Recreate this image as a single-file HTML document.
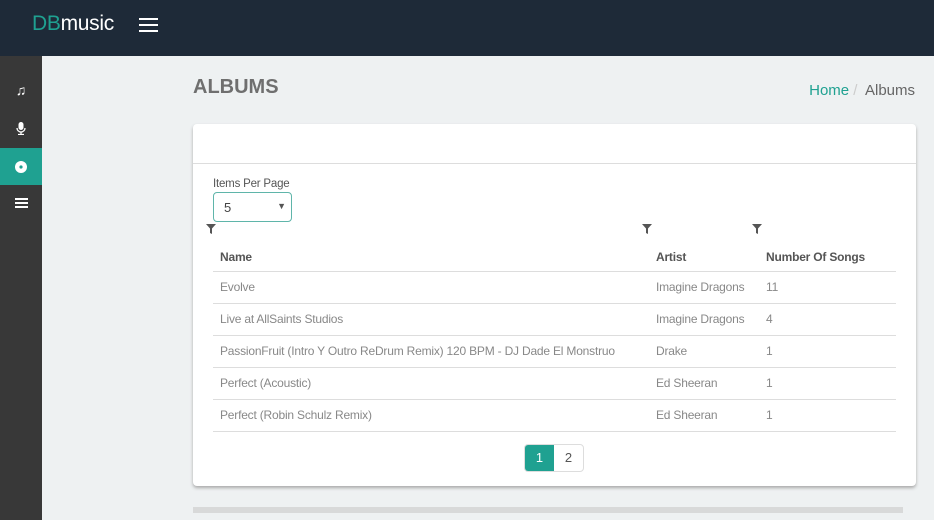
<!DOCTYPE html><html><head><style>
*{margin:0;padding:0;box-sizing:border-box}
body{width:934px;height:520px;overflow:hidden;background:#eef1f2;font-family:"Liberation Sans",sans-serif;position:relative}
.hdr{position:absolute;left:0;top:0;width:934px;height:56px;background:#1e2a38}
.logo{position:absolute;left:32px;top:12px;font-size:21px;color:#fff;letter-spacing:-0.3px}
.logo span{color:#1fa191}
.burger{position:absolute;left:139px;top:18px;width:19px}
.burger i{display:block;height:2px;background:#fff;margin-bottom:4px}
.side{position:absolute;left:0;top:56px;width:42px;height:464px;background:#383838}
.si{position:absolute;left:0;width:42px;height:37px;color:#fff;font-size:14px;font-weight:bold;text-align:center;line-height:37px}
h1{position:absolute;left:193px;top:76px;font-size:20px;color:#6f6f6f;font-weight:bold}
.bc{position:absolute;right:19px;top:82px;font-size:15px;color:#666}
.bc a{color:#1fa191}
.card{position:absolute;left:193px;top:124px;width:723px;height:362px;background:#fff;border-radius:4px;box-shadow:0 2px 3px #aaa}
.card .line{position:absolute;left:0;top:39px;width:100%;height:1px;background:#ddd}
.lbl{position:absolute;left:20px;top:54px;font-size:11.5px;color:#555;letter-spacing:-0.2px}
.sel{position:absolute;left:20px;top:68px;width:79px;height:30px;border:1px solid #5fb5aa;border-radius:4px;font-size:13px;color:#444;padding:7px 10px}
.sel b{position:absolute;right:5px;top:8px;font-size:9px;color:#555}
.f{position:absolute;top:100px;width:10px;height:10px}
table{position:absolute;left:20px;top:113px;width:683px;border-collapse:collapse;font-size:12px;letter-spacing:-0.2px;white-space:nowrap}
th{text-align:left;color:#555;height:34px;padding:6px 7px 0;border-bottom:1px solid #ddd}
td{color:#888;height:32px;padding:0 7px;border-bottom:1px solid #ddd}
.pg{position:absolute;left:331px;top:320px;height:28px;border:1px solid #ddd;border-radius:4px;overflow:hidden;display:flex;font-size:13px}
.pg span{width:29px;text-align:center;line-height:26px;color:#555}
.pg .a{background:#1fa191;color:#fff}
.bar{position:absolute;left:193px;top:507px;width:710px;height:6px;background:#d8d9d9}
</style></head><body>
<div class="hdr"><div class="logo"><span>DB</span>music</div><div class="burger"><i></i><i></i><i></i></div></div>
<div class="side">
<div class="si" style="top:16px">♫</div>
<div class="si" style="top:53px"><svg width="10" height="13" viewBox="0 0 10 13" style="vertical-align:middle"><rect x="2.5" y="0" width="5" height="8" rx="2.5" fill="#fff"/><path d="M1 6a4 4 0 0 0 8 0" stroke="#fff" fill="none" stroke-width="1.3"/><path d="M5 10v2M2 12.5h6" stroke="#fff" stroke-width="1.3"/></svg></div>
<div class="si" style="top:92px;background:#1fa191"><svg width="12" height="12" viewBox="0 0 12 12" style="vertical-align:middle"><circle cx="6" cy="6" r="6" fill="#fff"/><circle cx="6" cy="6" r="1.6" fill="#1fa191"/></svg></div>
<div class="si" style="top:128px"><svg width="13" height="10" viewBox="0 0 13 10" style="vertical-align:middle"><path d="M0 0h13v2H0zM0 4h13v2H0zM0 8h13v2H0z" fill="#fff"/></svg></div>
</div>
<h1>ALBUMS</h1>
<div class="bc"><a>Home</a> <span style="color:#ccc">/</span>&nbsp; Albums</div>
<div class="card"><div class="line"></div>
<div class="lbl">Items Per Page</div>
<div class="sel">5<b>▼</b></div>
<svg class="f" style="left:13px" viewBox="0 0 10 10"><path d="M0 0H10L6 4.5V10L4 9V4.5Z" fill="#555"/></svg>
<svg class="f" style="left:449px" viewBox="0 0 10 10"><path d="M0 0H10L6 4.5V10L4 9V4.5Z" fill="#555"/></svg>
<svg class="f" style="left:559px" viewBox="0 0 10 10"><path d="M0 0H10L6 4.5V10L4 9V4.5Z" fill="#555"/></svg>
<table>
<tr><th style="width:436px">Name</th><th style="width:110px">Artist</th><th>Number Of Songs</th></tr>
<tr><td>Evolve</td><td>Imagine Dragons</td><td>11</td></tr>
<tr><td>Live at AllSaints Studios</td><td>Imagine Dragons</td><td>4</td></tr>
<tr><td>PassionFruit (Intro Y Outro ReDrum Remix) 120 BPM - DJ Dade El Monstruo</td><td>Drake</td><td>1</td></tr>
<tr><td>Perfect (Acoustic)</td><td>Ed Sheeran</td><td>1</td></tr>
<tr><td>Perfect (Robin Schulz Remix)</td><td>Ed Sheeran</td><td>1</td></tr>
</table>
<div class="pg"><span class="a">1</span><span>2</span></div>
</div>
<div class="bar"></div>
</body></html>
